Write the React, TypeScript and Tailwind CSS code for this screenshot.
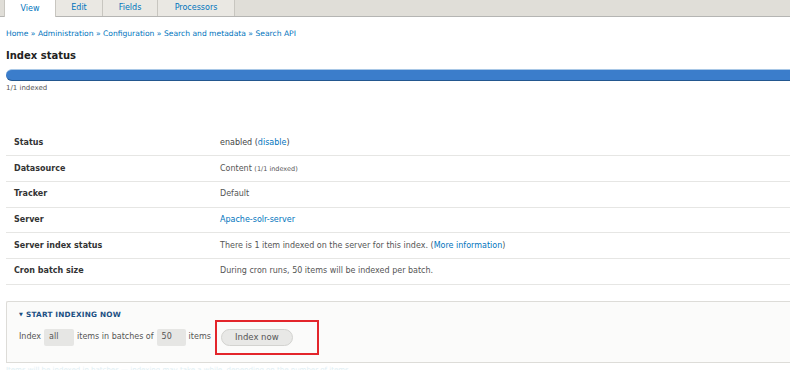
import React from "react";

const tabs = ["View", "Edit", "Fields", "Processors"];

type Row = { label: string; value: React.ReactNode };

const rows: Row[] = [
  {
    label: "Status",
    value: (
      <>
        enabled (<a className="text-[#0074bd]">disable</a>)
      </>
    ),
  },
  {
    label: "Datasource",
    value: (
      <>
        Content <span className="text-[6.5px]">(1/1 indexed)</span>
      </>
    ),
  },
  { label: "Tracker", value: "Default" },
  { label: "Server", value: <a className="text-[#0074bd]">Apache-solr-server</a> },
  {
    label: "Server index status",
    value: (
      <>
        There is 1 item indexed on the server for this index. (
        <a className="text-[#0074bd]">More information</a>)
      </>
    ),
  },
  { label: "Cron batch size", value: "During cron runs, 50 items will be indexed per batch." },
];

export default function App() {
  return (
    <div
      className="relative w-[790px] h-[370px] overflow-hidden bg-white text-[#333]"
      style={{ fontFamily: '"DejaVu Sans", Verdana, sans-serif' }}
    >
      {/* tabs */}
      <div className="flex h-[17px] bg-[#e0ded8] border-b border-[#b5b5b3] pl-[4px]">
        {tabs.map((t, i) => (
          <div
            key={t}
            className={
              i === 0
                ? "flex items-center justify-center w-[52px] h-[17px] bg-white border-x border-[#c8c6c0] text-[8px] text-[#0074bd]"
                : "flex items-center justify-center h-[16px] bg-[#eae8e3] border-r border-[#c8c6c0] text-[8px] text-[#0074bd] " +
                  (i === 1 ? "w-[47px]" : i === 2 ? "w-[55px]" : "w-[77px]")
            }
          >
            {t}
          </div>
        ))}
      </div>

      <div className="ml-[6px] w-[900px]">
        {/* breadcrumb */}
        <div className="mt-[12px] text-[7.6px] leading-[10px] text-[#0074bd]">
          Home » Administration » Configuration » Search and metadata » Search API
        </div>

        <h1 className="mt-[11px] text-[10px] leading-[12px] font-bold text-[#222]">Index status</h1>

        {/* progress */}
        <div className="mt-[7px] h-[12px] rounded-l-[6px] bg-[#3b7dcb] border-t border-[#a8c7e6] border-b border-b-[#23578f]" />
        <div className="mt-[3px] text-[7px] leading-[9px] text-[#555]">1/1 indexed</div>

        {/* table */}
        <table className="mt-[37px] w-full border-collapse text-[8px]">
          <tbody>
            {rows.map((r, i) => (
              <tr key={r.label} className="h-[25.7px] border-b border-[#e6e6e4]">
                <td className="w-[214px] pl-[8px] font-bold text-[#333] align-middle">{r.label}</td>
                <td className={"align-middle " + (i === 0 ? "text-[#444]" : "text-[#555]")}>{r.value}</td>
              </tr>
            ))}
          </tbody>
        </table>

        {/* details */}
        <div className="mt-[16px] h-[62px] bg-[#fbfbfa] border-t border-[#c9c8c4] border-l border-b border-[#dddcd8] rounded-tl-[2px] px-[12px]">
          <div className="mt-[7px] text-[7.3px] leading-[10px] font-bold uppercase text-[#1b4f83] tracking-[0.2px]">
            <span className="text-[5px] mr-[3px] align-[1px]">▼</span>Start indexing now
          </div>
          <div className="mt-[9px] flex items-center text-[8px] text-[#555]">
            <span>Index</span>
            <span className="ml-[3px] w-[30px] h-[17px] flex items-center pl-[5px] bg-[#e6e6e4] rounded-[2px] text-[#555]">
              all
            </span>
            <span className="ml-[3px]">items in batches of</span>
            <span className="ml-[3px] w-[29px] h-[17px] flex items-center pl-[5px] bg-[#e6e6e4] rounded-[2px] text-[#555]">
              50
            </span>
            <span className="ml-[3px]">items</span>
            <button className="ml-[10px] w-[72px] h-[17px] rounded-full bg-[#e8e8e6] border border-[#d3d3d0] text-[8.5px] text-[#555]">
              Index now
            </button>
          </div>
        </div>

        <div className="mt-[3px] text-[7px] leading-[9px] text-[#e0eef3] whitespace-nowrap">
          Items will be indexed in batches — indexing may take a while, depending on the number of items.
        </div>
      </div>

      {/* annotation */}
      <div className="absolute left-[215px] top-[320px] w-[104px] h-[35px] border-[2.5px] border-[#e3252b]" />
    </div>
  );
}
